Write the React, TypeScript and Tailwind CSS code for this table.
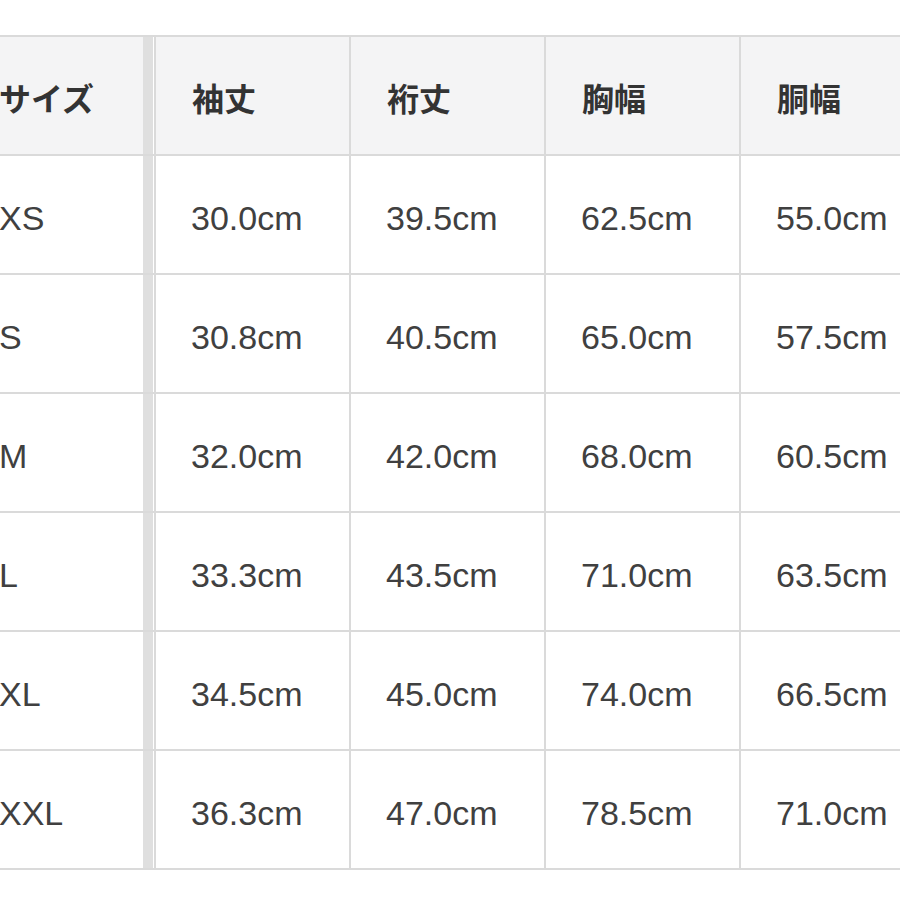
import React from "react";

const headers = ["袖丈", "裄丈", "胸幅", "胴幅"];
const rows: [string, string[]][] = [
  ["XS", ["30.0cm", "39.5cm", "62.5cm", "55.0cm"]],
  ["S", ["30.8cm", "40.5cm", "65.0cm", "57.5cm"]],
  ["M", ["32.0cm", "42.0cm", "68.0cm", "60.5cm"]],
  ["L", ["33.3cm", "43.5cm", "71.0cm", "63.5cm"]],
  ["XL", ["34.5cm", "45.0cm", "74.0cm", "66.5cm"]],
  ["XXL", ["36.3cm", "47.0cm", "78.5cm", "71.0cm"]],
];

export default function App() {
  return (
    <div className="w-[900px] h-[900px] overflow-hidden bg-white">
      <div className="mt-[35px] ml-[-37px] w-[1000px] border-t-2 border-[#dadada]">
        <div className="flex h-[119px] bg-[#f4f4f5] border-b-2 border-[#dadada] text-[32px] font-bold text-[#333] [font-family:'Noto_Sans_CJK_JP',sans-serif]">
          <div className="w-[180px] pl-[36px] flex items-center pt-[2px]">サイズ</div>
          <div className="w-[10px] bg-[#dfdfdf]"></div>
          <div className="w-[1px] bg-white"></div>
          {headers.map((h) => (
            <div key={h} className="w-[195px] border-l-2 border-[#dadada] pl-[36px] flex items-center pt-[2px]">
              {h}
            </div>
          ))}
        </div>
        {rows.map(([size, vals]) => (
          <div
            key={size}
            className="flex h-[119px] border-b-2 border-[#dadada] text-[34px] text-[#404040] [font-family:'Liberation_Sans',Arial,sans-serif]"
          >
            <div className="w-[180px] pl-[36px] flex items-center pt-[8px]">{size}</div>
            <div className="w-[10px] bg-[#dfdfdf]"></div>
            <div className="w-[1px] bg-white"></div>
            {vals.map((v, i) => (
              <div key={i} className="w-[195px] border-l-2 border-[#dadada] pl-[35px] flex items-center pt-[8px]">
                {v}
              </div>
            ))}
          </div>
        ))}
      </div>
    </div>
  );
}
